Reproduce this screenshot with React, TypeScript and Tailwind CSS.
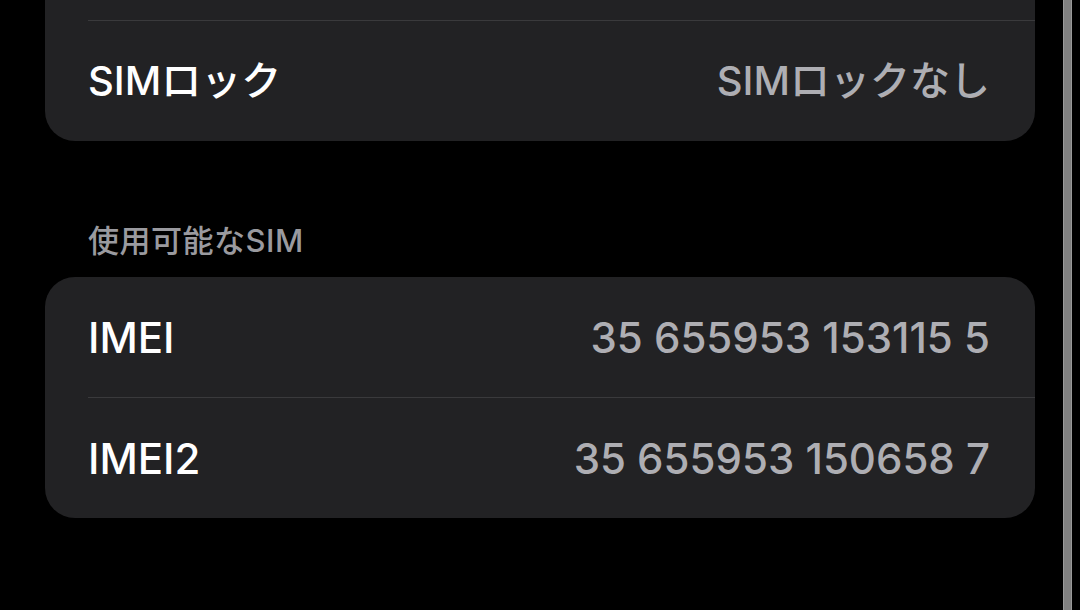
const FONT = { fontFamily: "Inter, 'Noto Sans CJK JP', sans-serif" };

type Row = { label: string; value: string };

function InfoRow({ label, value, divider, size }: Row & { divider?: boolean; size: string }) {
  return (
    <div className="pl-[43px]">
      {divider && <div className="h-px bg-[#3a3a3c]" />}
      <div className={`h-[120px] flex items-center justify-between pr-[45px] ${size}`}>
        <span className="font-medium text-white">{label}</span>
        <span className="font-medium text-[#aeaeb3]">{value}</span>
      </div>
    </div>
  );
}

export default function App() {
  return (
    <div className="w-[1080px] h-[610px] bg-black flex overflow-hidden" style={FONT}>
      <div className="flex-1 pl-[45px] pr-[28px]">
        <div className="bg-[#222224] rounded-b-[30px] pt-[20px]">
          <InfoRow label="SIMロック" value="SIMロックなし" size="text-[40px]" divider />
        </div>

        <div className="h-[136px] flex items-center pl-[43px] pt-[64px]">
          <span className="text-[31px] font-medium text-[#9a9a9f] tracking-[0.5px]">使用可能なSIM</span>
        </div>

        <div className="bg-[#222224] rounded-[30px]">
          <InfoRow label="IMEI" value="35 655953 153115 5" size="text-[42px]" />
          <InfoRow label="IMEI2" value="35 655953 150658 7" size="text-[42px]" divider />
        </div>
      </div>
      <div className="w-[9px] bg-[#808080] border-x border-[#9a9a9a]" />
      <div className="w-[8px]" />
    </div>
  );
}
